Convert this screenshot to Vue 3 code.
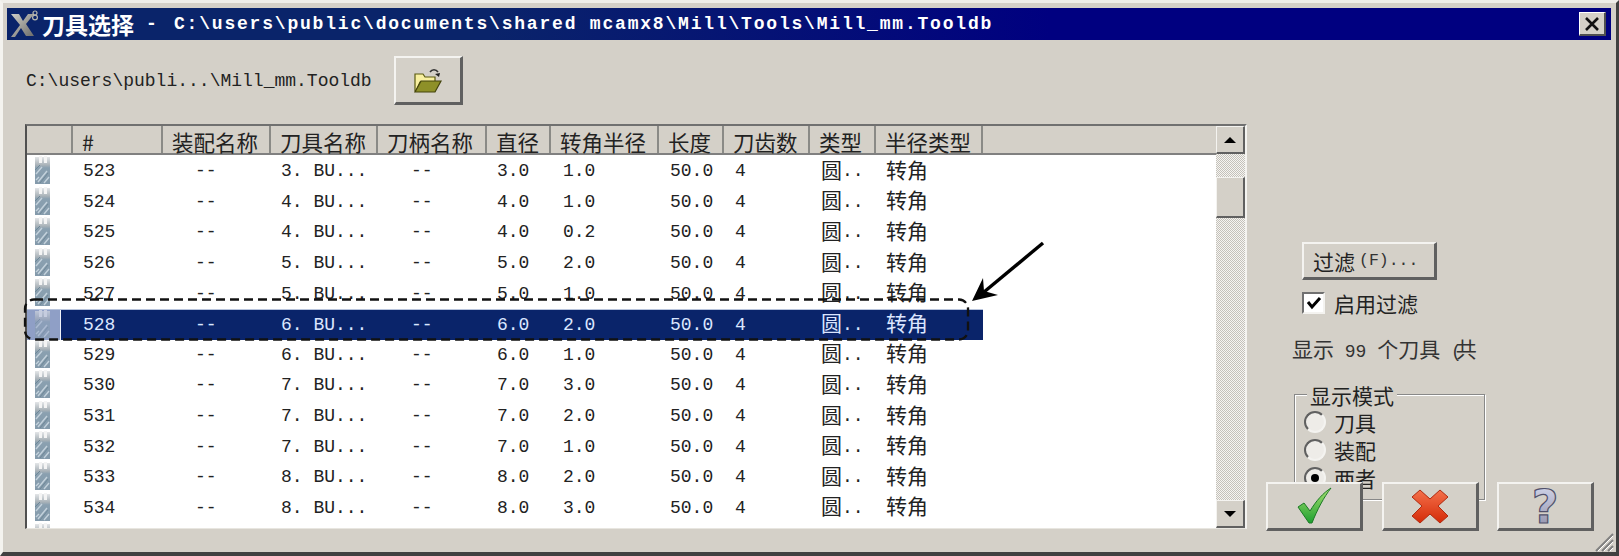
<script setup>
const columns = [
  { key: 'id', pad: 10 },
  { key: 'assembly', pad: 32 },
  { key: 'tool', pad: 10 },
  { key: 'holder', pad: 33 },
  { key: 'dia', pad: 10 },
  { key: 'corner', pad: 12 },
  { key: 'length', pad: 11 },
  { key: 'flutes', pad: 11 },
  { key: 'type', pad: 11 },
  { key: 'radius', pad: 10 }
]
const headers = ['', '#', '装配名称', '刀具名称', '刀柄名称', '直径', '转角半径', '长度', '刀齿数', '类型', '半径类型', '']
const raw = [
  [523, 3, '1.0'], [524, 4, '1.0'], [525, 4, '0.2'], [526, 5, '2.0'],
  [527, 5, '1.0'], [528, 6, '2.0'], [529, 6, '1.0'], [530, 7, '3.0'],
  [531, 7, '2.0'], [532, 7, '1.0'], [533, 8, '2.0'], [534, 8, '3.0']
]
const rows = raw.map(([id, d, corner]) => ({
  id,
  selected: id === 528,
  cells: {
    id: String(id),
    assembly: '--',
    tool: `${d}. BU...`,
    holder: '--',
    dia: `${d}.0`,
    corner,
    length: '50.0',
    flutes: '4',
    type: '圆',
    radius: '转角'
  }
}))
const modes = [
  { label: '刀具', on: false },
  { label: '装配', on: false },
  { label: '两者', on: true }
]
</script>

<template>
  <div class="window">
    <svg class="defs" width="0" height="0" aria-hidden="true">
      <defs>
        <linearGradient id="toolShade" x1="0" y1="0" x2="0" y2="1">
          <stop offset="0" stop-color="#e4e6e8" />
          <stop offset="0.3" stop-color="#a9b2b8" />
          <stop offset="0.4" stop-color="#8aa0b0" />
          <stop offset="1" stop-color="#849aab" />
        </linearGradient>
        <linearGradient id="logoShade" x1="0" y1="0" x2="1" y2="1">
          <stop offset="0" stop-color="#d0d0c8" />
          <stop offset="1" stop-color="#6a6a68" />
        </linearGradient>
        <linearGradient id="okShade" x1="0" y1="0" x2="0" y2="1">
          <stop offset="0" stop-color="#a8e070" />
          <stop offset="1" stop-color="#1ea030" />
        </linearGradient>
        <linearGradient id="noShade" x1="0" y1="0" x2="0" y2="1">
          <stop offset="0" stop-color="#f4704a" />
          <stop offset="1" stop-color="#d42a08" />
        </linearGradient>
        <linearGradient id="helpShade" x1="0" y1="0" x2="0" y2="1">
          <stop offset="0" stop-color="#d8dcf0" />
          <stop offset="1" stop-color="#8a8aa4" />
        </linearGradient>
        <symbol id="tool" viewBox="0 0 15 28">
          <rect x="0" y="1" width="15" height="27" fill="url(#toolShade)" />
          <path d="M4 0h3v7H4zM9 0h3v7H9z" fill="#f4f4f4" />
          <path d="M1 18l6-7M3 26l9-11M9 27l5-6M1 24l3-3" stroke="#c4d2dc" stroke-width="1.4" fill="none" />
          <path d="M0 14l5-5M5 27l8-10" stroke="#6f8898" stroke-width="1" fill="none" />
        </symbol>
      </defs>
    </svg>

    <header class="titlebar">
      <svg class="logo" width="30" height="30" viewBox="0 0 30 30">
        <path d="M1 5h8l4 7 5-7h6l-8 10 8 12h-8l-5-8-6 9H1l9-12z" fill="url(#logoShade)" />
        <circle cx="25" cy="4" r="2" fill="none" stroke="#b8b8b0" stroke-width="1.2" />
        <circle cx="25" cy="8.5" r="2.4" fill="none" stroke="#b8b8b0" stroke-width="1.2" />
      </svg>
      <span class="title-han">刀具选择</span>
      <span class="title-dash">-</span>
      <span class="title-path">C:\users\public\documents\shared mcamx8\Mill\Tools\Mill_mm.Tooldb</span>
      <button class="close" type="button" aria-label="关闭">
        <svg width="16" height="14" viewBox="0 0 16 14">
          <path d="M2 1l12 12M14 1L2 13" stroke="#111" stroke-width="2.6" fill="none" />
        </svg>
      </button>
    </header>

    <div class="body">
      <section class="left">
        <div class="path-row">
          <span class="path">C:\users\publi...\Mill_mm.Tooldb</span>
          <button class="raised folder" type="button" aria-label="打开">
            <svg width="30" height="26" viewBox="0 0 30 26">
              <path d="M17 5c2-3 6-3 8 0" stroke="#333" stroke-width="1.6" fill="none" />
              <path d="M27 6l-5 1 4 3z" fill="#222" />
              <path d="M2 7h8l2 3h10v5H7l-4 9H2z" fill="#f8f0a0" stroke="#5a5a10" stroke-width="1.2" />
              <path d="M8 14h20l-6 11H2z" fill="#8e9028" stroke="#44440c" stroke-width="1.2" />
            </svg>
          </button>
        </div>

        <div class="list">
          <div class="table">
            <div class="head grid">
              <div v-for="(h, i) in headers" :key="i" class="head-cell">{{ h }}</div>
            </div>
            <div class="rows">
              <div v-for="row in rows" :key="row.id" class="row grid" :class="{ selected: row.selected }">
                <div class="icon-cell">
                  <svg class="tool" width="15" height="28"><use href="#tool" /></svg>
                </div>
                <div
                  v-for="col in columns"
                  :key="col.key"
                  class="cell"
                  :style="{ paddingLeft: col.pad + 'px' }"
                >
                  <template v-if="col.key === 'type'"><span class="han">{{ row.cells.type }}</span>..</template>
                  <span v-else-if="col.key === 'radius'" class="han">{{ row.cells.radius }}</span>
                  <template v-else>{{ row.cells[col.key] }}</template>
                </div>
              </div>
              <div class="row grid">
                <div class="icon-cell">
                  <svg class="tool" width="15" height="28"><use href="#tool" /></svg>
                </div>
              </div>
            </div>
          </div>
          <div class="scrollbar">
            <div class="sb-btn sb-up"><i class="tri-up"></i></div>
            <div class="sb-track">
              <div class="sb-thumb"></div>
            </div>
            <div class="sb-btn sb-down"><i class="tri-down"></i></div>
          </div>
        </div>
      </section>

      <aside class="right">
        <button class="raised filter" type="button"><span class="han">过滤</span><span>(F)...</span></button>
        <label class="check-row">
          <span class="checkbox">
            <svg width="16" height="14" viewBox="0 0 16 14">
              <path d="M2 6l4 5 8-9" stroke="#000" stroke-width="3" fill="none" />
            </svg>
          </span>
          <span class="han">启用过滤</span>
        </label>
        <div class="count"><span class="han">显示</span> 99 <span class="han">个刀具</span> <span class="paren">(</span><span class="han">共</span></div>
        <div class="group">
          <div class="legend han">显示模式</div>
          <div v-for="m in modes" :key="m.label" class="radio-row">
            <span class="radio" :class="{ on: m.on }"></span>
            <span class="han">{{ m.label }}</span>
          </div>
        </div>
        <div class="actions">
          <button class="raised action" type="button" aria-label="确定">
            <svg width="48" height="40" viewBox="0 0 48 40">
              <path d="M8 21l6-4 6 8C26 15 33 7 41 2c-7 9-14 22-19 35h-3z" fill="url(#okShade)" stroke="#1d7a26" stroke-width="1" />
            </svg>
          </button>
          <button class="raised action" type="button" aria-label="取消">
            <svg width="38" height="36" viewBox="0 0 38 36">
              <path d="M9 2l10 9 10-9 8 7-10 9 10 10-8 7-10-9-10 9-8-7 10-10L1 9z" fill="url(#noShade)" stroke="#b02a10" stroke-width="1" />
            </svg>
          </button>
          <button class="raised action" type="button" aria-label="帮助">
            <svg width="40" height="42" viewBox="0 0 40 42">
              <text x="20" y="38" text-anchor="middle" class="help-mark">?</text>
            </svg>
          </button>
        </div>
      </aside>
    </div>

    <svg class="grip" width="22" height="22" viewBox="0 0 22 22" aria-hidden="true">
      <path d="M21 4L4 21M21 10L10 21M21 16L16 21" stroke="#808080" stroke-width="2" fill="none" />
      <path d="M21 6L6 21M21 12L12 21M21 18L18 21" stroke="#fff" stroke-width="1" fill="none" />
    </svg>

    <svg class="annotation" width="1619" height="556" viewBox="0 0 1619 556" aria-hidden="true">
      <rect x="25" y="299.500" width="943" height="40" rx="9" fill="none" stroke="#111" stroke-width="2.3" stroke-dasharray="9 5" />
      <path d="M1043 243L984 292" stroke="#000" stroke-width="3.4" fill="none" />
      <path d="M972 301L983 278L984 291L998 295z" fill="#000" />
    </svg>
  </div>
</template>

<style scoped>
.window {
  position: relative;
  width: 1619px;
  height: 556px;
  box-sizing: border-box;
  overflow: hidden;
  display: flex;
  flex-direction: column;
  background: #d4d0c8;
  border-style: solid;
  border-width: 3px 3px 4px 3px;
  border-color: #efeee9 #404040 #404040 #f4f3ef;
  padding: 5px 5px 0 4px;
  color: #222;
  font-family: "Liberation Mono", "Noto Sans CJK SC", monospace;
  font-size: 18px;
}
.defs { position: absolute; }
.han {
  font-family: "Noto Sans CJK SC", sans-serif;
  font-size: 21px;
}
button {
  font: inherit;
  color: inherit;
  padding: 0;
  margin: 0;
}
.raised {
  display: flex;
  align-items: center;
  justify-content: center;
  box-sizing: border-box;
  background: #d4d0c8;
  border-style: solid;
  border-width: 2px 3px 3px 2px;
  border-color: #f4f3f0 #606060 #606060 #f4f3f0;
}

.titlebar {
  flex: none;
  height: 32px;
  display: flex;
  align-items: center;
  background: linear-gradient(90deg, #0a246a 0, #0a246a 30%, #000080 65%);
  color: #fff;
  padding-left: 3px;
}
.logo { flex: none; margin-right: 2px; }
.title-han {
  font-family: "Noto Sans CJK SC", sans-serif;
  font-weight: 700;
  font-size: 23px;
  line-height: 32px;
}
.title-dash {
  font-weight: 700;
  margin: 0 17px 0 12px;
  width: 11px;
}
.title-path {
  font-weight: 700;
  letter-spacing: 1.8px;
  white-space: pre;
}
.close {
  margin-left: auto;
  margin-right: 5px;
  width: 27px;
  height: 24px;
  display: flex;
  align-items: center;
  justify-content: center;
  box-sizing: border-box;
  background: #d4d0c8;
  border-style: solid;
  border-width: 1px 2px 2px 1px;
  border-color: #fff #505050 #505050 #fff;
}

.body {
  flex: 1;
  display: flex;
  min-height: 0;
}
.left {
  flex: none;
  width: 1240px;
  box-sizing: border-box;
  padding-left: 18px;
}
.path-row {
  margin-top: 16px;
  height: 49px;
  display: flex;
  align-items: center;
}
.path { white-space: pre; margin-left: 1px; }
.folder {
  width: 69px;
  height: 49px;
  margin-left: 22px;
}

.list {
  margin-top: 19px;
  width: 1222px;
  height: 405px;
  box-sizing: border-box;
  display: flex;
  background: #fff;
  border-style: solid;
  border-width: 2px 2px 1px 2px;
  border-color: #707070 #f4f3f0 #e8e6e0 #505050;
  overflow: hidden;
}
.table {
  flex: none;
  width: 1189px;
  min-width: 0;
  overflow: hidden;
}
.grid {
  display: grid;
  grid-template-columns: 46px 90px 108px 107px 109px 64px 108px 65px 86px 66px 107px 1fr;
}
.head {
  height: 29px;
  box-sizing: border-box;
  border-bottom: 2px solid #808080;
  background: #d4d0c8;
}
.head-cell {
  box-sizing: border-box;
  padding-left: 9px;
  border-right: 2px solid #8a8a86;
  font-family: "Noto Sans CJK SC", sans-serif;
  font-size: 21.5px;
  line-height: 27px;
  padding-top: 2px;
  height: 27px;
  white-space: nowrap;
}
.head-cell:last-child { border-right: 0; }
.rows {
  margin-top: 1px;
}
.row {
  height: 30.6px;
  color: #222;
}
.cell {
  display: flex;
  align-items: center;
  height: 100%;
  box-sizing: border-box;
  white-space: pre;
}
.cell .han {
  line-height: 1;
  margin-bottom: 4px;
}
.icon-cell {
  height: 100%;
  padding-left: 8px;
  overflow: visible;
}
.tool { display: block; }

.selected {
  color: #dbe6ff;
}
.selected .cell {
  background: #0a246a;
  border-top: 1px solid #b8c4dc;
}
.selected .icon-cell {
  background: linear-gradient(90deg, #8f9fc6 33px, #f0f2f8 33px, #f0f2f8 34px, #0a246a 34px);
  border-top: 1px solid #b8c4dc;
  box-sizing: border-box;
}
.selected .tool { opacity: 0.55; }

.scrollbar {
  flex: 1;
  display: flex;
  flex-direction: column;
  min-width: 0;
  background: #d4d0c8;
}
.sb-btn {
  flex: none;
  height: 28px;
  display: flex;
  align-items: center;
  justify-content: center;
  box-sizing: border-box;
  background: #d4d0c8;
  border-style: solid;
  border-width: 1px 2px 2px 1px;
  border-color: #f4f3f0 #606060 #606060 #f4f3f0;
}
.tri-up, .tri-down {
  display: block;
  width: 0;
  height: 0;
  border-left: 6px solid transparent;
  border-right: 6px solid transparent;
}
.tri-up { border-bottom: 6px solid #000; }
.tri-down { border-top: 6px solid #000; }
.sb-track {
  flex: 1;
  background: conic-gradient(#f6f5f2 25%, #c4c1ba 0 50%, #f6f5f2 0 75%, #c4c1ba 0) 0 0 / 2px 2px;
  padding-top: 23px;
}
.sb-thumb {
  height: 41px;
  box-sizing: border-box;
  background: #d4d0c8;
  border-style: solid;
  border-width: 1px 2px 2px 1px;
  border-color: #f4f3f0 #606060 #606060 #f4f3f0;
}

.right {
  flex: none;
  width: 360px;
  box-sizing: border-box;
  padding-left: 19px;
  padding-top: 202px;
  display: flex;
  flex-direction: column;
  align-items: flex-start;
}
.filter {
  width: 135px;
  height: 38px;
  margin-left: 36px;
  gap: 4px;
  justify-content: flex-start;
  padding-left: 9px;
  font-size: 16.5px;
}
.filter span:last-child { color: #333; }
.check-row {
  margin: 12px 0 0 36px;
  height: 22px;
  display: flex;
  align-items: center;
  gap: 9px;
}
.checkbox {
  width: 23px;
  height: 22px;
  box-sizing: border-box;
  display: flex;
  align-items: center;
  justify-content: center;
  background: #fff;
  border-style: solid;
  border-width: 2px;
  border-color: #707070 #f4f3f0 #f4f3f0 #707070;
}
.count {
  margin: 19px 0 0 26px;
  width: 190px;
  height: 30px;
  line-height: 30px;
  white-space: pre;
  color: #333;
}
.paren { margin-right: -6px; }
.group {
  margin: 31px 0 0 28px;
  width: 191px;
  height: 106px;
  box-sizing: border-box;
  border: 1px solid #888;
  box-shadow: 1px 1px 0 #fff, inset 1px 1px 0 #fff;
  padding-left: 9px;
}
.legend {
  display: block;
  width: max-content;
  margin: -12px 0 0 3px;
  padding: 0 3px;
  height: 25px;
  line-height: 25px;
  background: #d4d0c8;
}
.radio-row {
  height: 28px;
  display: flex;
  align-items: center;
  gap: 8px;
}
.radio {
  width: 22px;
  height: 22px;
  flex: none;
  box-sizing: border-box;
  border-radius: 50%;
  background: #eeece8;
  border: 2px solid;
  border-color: #606060 #f4f3f0 #f4f3f0 #606060;
  display: flex;
  align-items: center;
  justify-content: center;
}
.radio.on::after {
  content: "";
  width: 8px;
  height: 8px;
  border-radius: 50%;
  background: #000;
}
.actions {
  position: relative;
  margin-top: -18px;
  display: flex;
  gap: 18.5px;
}
.action {
  width: 97px;
  height: 49px;
}
.help-mark {
  font-family: "DejaVu Sans", sans-serif;
  font-weight: 700;
  font-size: 46px;
  fill: url(#helpShade);
  stroke: #50506a;
  stroke-width: 1.2;
}
.grip {
  position: absolute;
  right: 2px;
  bottom: 0;
}
.annotation {
  position: absolute;
  left: -3px;
  top: -3px;
  pointer-events: none;
}
</style>
